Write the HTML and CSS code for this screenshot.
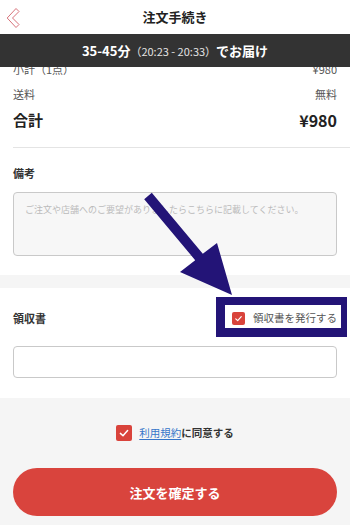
FILE: index.html
```html
<!DOCTYPE html>
<html lang="ja">
<head>
<meta charset="utf-8">
<title>注文手続き</title>
<link rel="stylesheet" href="styles.css">
</head>
<body>
<div class="page">
  <header class="header">
    <span class="back">
      <svg width="40" height="34" viewBox="0 0 40 34"><path d="M16 8.5 L19 11.5 L12.5 18 L19 24.5 L16 27.5 L7.2 18 Z" fill="none" stroke="#d8727a" stroke-width="1" stroke-linejoin="round"/></svg>
    </span>
    <h1 class="title">注文手続き</h1>
    <span></span>
  </header>
  <div class="delivery"><b>35-45分</b><span class="time">（20:23 - 20:33）</span><b>でお届け</b></div>

  <section class="summary">
    <div class="row row-clipped"><span>小計（1点）</span><span>¥980</span></div>
    <div class="row"><span>送料</span><span>無料</span></div>
    <div class="row row-total"><span>合計</span><span>¥980</span></div>
  </section>
  <div class="divider"></div>

  <section class="notes">
    <h2 class="label">備考</h2>
    <textarea class="textarea" placeholder="ご注文や店舗へのご要望がありましたらこちらに記載してください。"></textarea>
  </section>

  <div class="band"></div>

  <section class="receipt">
    <div class="receipt-head">
      <h2 class="label">領収書</h2>
      <label class="check-label">
        <span class="checkbox checkbox-sm"><svg viewBox="0 0 16 16"><path d="M4.6 8.4 L7 10.6 L11.4 5.8" fill="none" stroke="#fff" stroke-width="1.5" stroke-linecap="round" stroke-linejoin="round"/></svg></span>
        領収書を発行する
      </label>
    </div>
    <input class="input" type="text">
  </section>

  <section class="footer">
    <div class="terms">
      <span class="checkbox"><svg viewBox="0 0 16 16"><path d="M4.4 8.4 L7 10.8 L11.6 5.6" fill="none" stroke="#fff" stroke-width="1.5" stroke-linecap="round" stroke-linejoin="round"/></svg></span>
      <span class="terms-text"><a class="link">利用規約</a>に同意する</span>
    </div>
    <button class="submit">注文を確定する</button>
  </section>

  <svg class="annotation" width="350" height="525" viewBox="0 0 350 525">
    <path d="M216 297H347V337H216Z M225 305V328H341V305Z" fill="#231477" fill-rule="evenodd"/>
    <polygon points="151.8,192.8 202.8,253.8 217,243 232,295 180,272 195.2,260.2 144.2,199.2" fill="#231477"/>
  </svg>
</div>
</body>
</html>
```

FILE: styles.css
```css
* { box-sizing: border-box; }
html, body { margin: 0; padding: 0; }
body {
  font-family: "Noto Sans CJK JP", "Noto Sans", sans-serif;
  background: #fff;
  color: #333;
}
.page {
  position: relative;
  width: 350px;
  min-height: 525px;
  display: flex;
  flex-direction: column;
  overflow: hidden;
}
.header {
  height: 34px;
  display: grid;
  grid-template-columns: 40px 1fr 40px;
  align-items: center;
  background: #fff;
}
.back { display: block; height: 34px; }
.back svg { display: block; }
.title {
  margin: 0;
  text-align: center;
  font-size: 13px;
  line-height: 18px;
  font-weight: 700;
  color: #222;
}
.delivery {
  height: 33px;
  background: #333;
  color: #fff;
  display: flex;
  align-items: center;
  justify-content: center;
  font-size: 13px;
  line-height: 18px;
}
.delivery b { font-weight: 700; }
.delivery .time { font-size: 11px; color: #e4e4e4; font-weight: 400; }

.summary { padding: 0 13px; }
.row {
  display: flex;
  justify-content: space-between;
  align-items: center;
  height: 26px;
  font-size: 11px;
  line-height: 14px;
  color: #555;
}
.row-clipped {
  height: 8px;
  overflow: hidden;
  align-items: flex-end;
  line-height: 11px;
  margin-bottom: 6px;
}
.row-total {
  font-size: 15px;
  font-weight: 700;
  color: #222;
}
.row-total span:last-child { font-size: 16px; }
.divider {
  height: 1px;
  background: #e4e4e4;
  margin: 14px 0 0 13px;
}

.notes { padding: 17px 13px 19px; }
.label {
  margin: 0;
  font-size: 11px;
  line-height: 16px;
  font-weight: 700;
  color: #333;
}
.textarea {
  display: block;
  width: 100%;
  height: 64px;
  margin-top: 11px;
  padding: 10px 11px;
  border: 1px solid #c9c9c9;
  border-radius: 4px;
  background: #f7f7f7;
  font-family: inherit;
  font-size: 9px;
  line-height: 14px;
  resize: none;
}
.textarea::placeholder { color: #bbb; }

.band { height: 13px; background: #f5f5f5; }

.receipt { padding: 20px 13px 20px; }
.receipt-head {
  display: flex;
  justify-content: space-between;
  align-items: center;
  height: 20px;
}
.check-label {
  display: flex;
  align-items: center;
  gap: 8px;
  font-size: 10.5px;
  line-height: 14px;
  color: #555;
}
.checkbox {
  width: 16px;
  height: 16px;
  border-radius: 2px;
  background: #d9433b;
  display: inline-flex;
  flex: none;
}
.checkbox svg { width: 100%; height: 100%; display: block; }
.checkbox-sm { width: 13px; height: 13px; }
.input {
  display: block;
  width: 100%;
  height: 32px;
  margin-top: 18px;
  border: 1px solid #c9c9c9;
  border-radius: 4px;
  background: #fff;
}

.footer {
  flex: 1;
  background: #f5f5f5;
  padding: 27px 13px 9px;
}
.terms {
  display: flex;
  align-items: center;
  justify-content: center;
  gap: 7px;
  height: 16px;
}
.terms-text {
  font-size: 10.5px;
  line-height: 14px;
  font-weight: 700;
  color: #333;
}
.link {
  color: #3575c9;
  font-weight: 400;
  text-decoration: underline;
  text-underline-offset: 2px;
}
.submit {
  display: block;
  width: 100%;
  height: 48px;
  margin-top: 27px;
  border: none;
  border-radius: 24px;
  background: #d9443d;
  color: #fff;
  font-family: inherit;
  font-size: 13px;
  font-weight: 700;
}
.annotation {
  position: absolute;
  top: 0;
  left: 0;
  pointer-events: none;
}
```
